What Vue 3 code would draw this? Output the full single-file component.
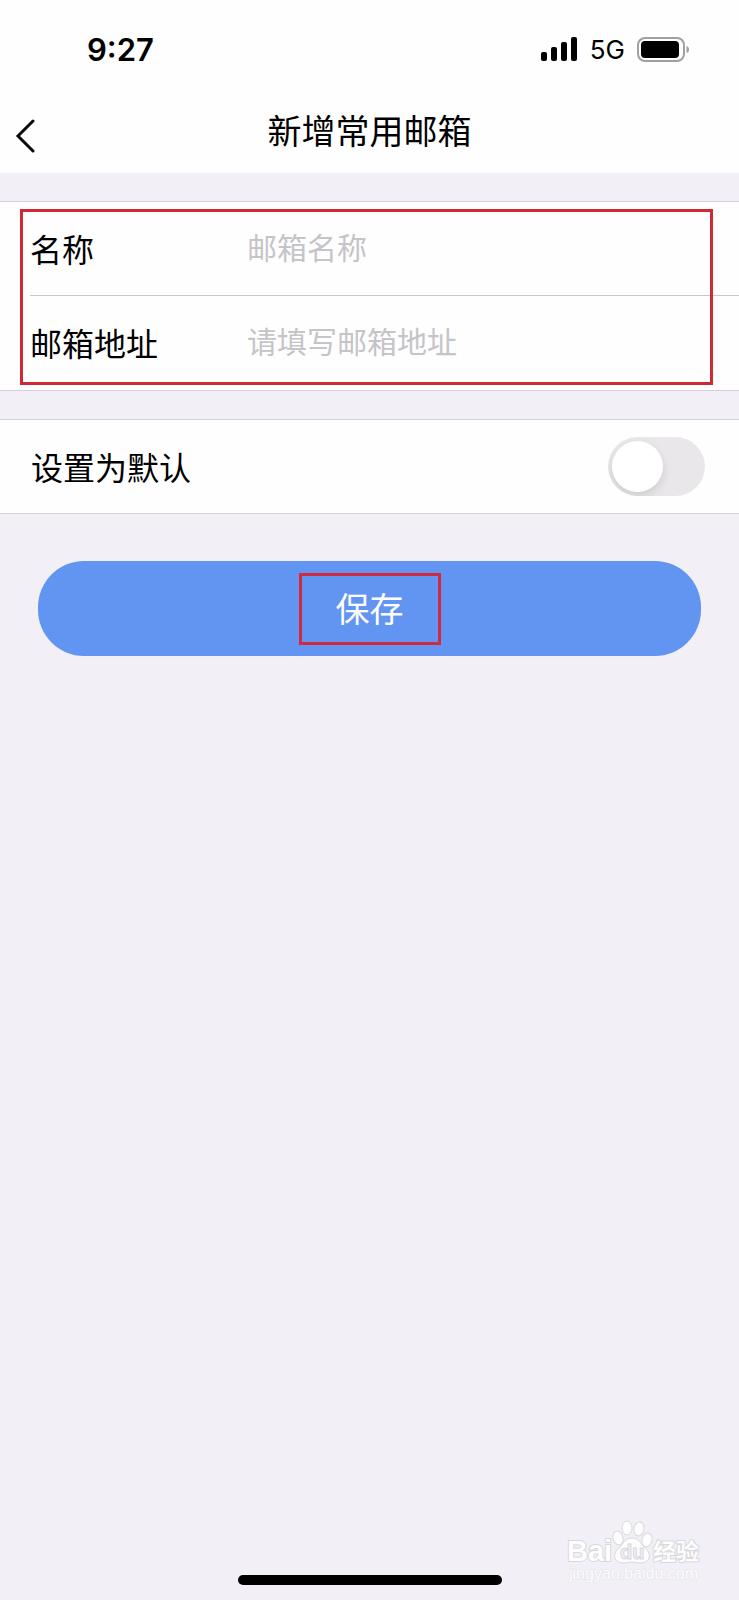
<template>
  <div class="page">
    <header class="top">
      <div class="status-bar">
        <span class="time">9:27</span>
        <div class="status-right">
          <svg class="signal" width="38" height="25" viewBox="0 0 38 25">
            <rect x="1" y="15" width="6" height="9" rx="2" />
            <rect x="11" y="10" width="6" height="14" rx="2" />
            <rect x="21" y="5" width="6" height="19" rx="2" />
            <rect x="31" y="0" width="6" height="24" rx="2" />
          </svg>
          <span class="network">5G</span>
          <svg class="battery" width="53" height="25" viewBox="0 0 53 25">
            <rect x="1" y="1" width="46" height="23" rx="7" fill="none" stroke="#a0a0a2" stroke-width="2" />
            <rect x="4" y="4" width="38" height="17" rx="4" />
            <path d="M49.500 9 Q52 9.500 52 12.500 Q52 15.500 49.500 16 Z" fill="#a0a0a2" />
          </svg>
        </div>
      </div>
      <nav class="nav-bar">
        <button class="back-btn" type="button" aria-label="返回">
          <svg width="20" height="34" viewBox="0 0 20 34" fill="none">
            <path d="M18 2L3 17L18 32" stroke="#0b0b0b" stroke-width="3" stroke-linecap="round" />
          </svg>
        </button>
        <h1 class="title">新增常用邮箱</h1>
      </nav>
    </header>

    <form class="form" @submit.prevent="save">
      <div class="group marked">
        <div v-for="field in fields" :key="field.id" class="row">
          <label class="label" :for="field.id">{{ field.label }}</label>
          <input
            :id="field.id"
            v-model="form[field.id]"
            class="input"
            :type="field.type"
            :placeholder="field.placeholder"
          />
        </div>
      </div>

      <div class="group">
        <div class="row">
          <label class="label label-wide" for="isDefault">设置为默认</label>
          <input id="isDefault" v-model="form.isDefault" class="switch" type="checkbox" role="switch" />
        </div>
      </div>

      <button class="save-btn" type="submit">
        <span class="save-text">保存</span>
      </button>
    </form>

    <footer class="footer">
      <div class="home-indicator"></div>
      <svg class="watermark" width="136" height="66" viewBox="0 0 136 66">
        <text class="brand" x="0" y="42" font-size="29">Bai</text>
        <g class="paw">
          <ellipse cx="51" cy="19" rx="5" ry="7" transform="rotate(-14 51 19)" />
          <ellipse cx="60" cy="9" rx="5" ry="7" />
          <ellipse cx="72" cy="10" rx="5" ry="7" transform="rotate(8 72 10)" />
          <ellipse cx="80" cy="21" rx="5" ry="7" transform="rotate(14 80 21)" />
          <path d="M65 19C57 19 56 26 51 30C45 35 47 44 56 44C60 44 62 43 65 43C68 43 70 44 74 44C83 44 85 35 79 30C74 26 73 19 65 19Z" />
        </g>
        <text class="du" x="53" y="40" font-size="20">du</text>
        <text class="brand cjk" x="86" y="41" font-size="23">经验</text>
        <text class="site" x="2" y="60" font-size="16">jingyan.baidu.com</text>
      </svg>
    </footer>
  </div>
</template>

<script setup>
import { reactive } from 'vue'

const fields = [
  { id: 'name', label: '名称', type: 'text', placeholder: '邮箱名称' },
  { id: 'address', label: '邮箱地址', type: 'email', placeholder: '请填写邮箱地址' }
]

const form = reactive({
  name: '',
  address: '',
  isDefault: false
})

const emit = defineEmits(['save'])

const save = () => {
  emit('save', { ...form })
}
</script>

<style>
body {
  background: #f2f0f6;
}
</style>

<style scoped>
.page {
  min-height: 100vh;
  display: flex;
  flex-direction: column;
  background: #f2f0f6;
  color: #000;
  font-family: 'Liberation Sans', 'Noto Sans CJK SC', sans-serif;
}

.top {
  background: #fefefe;
}

.status-bar {
  height: 98px;
  padding: 0 49px 0 87px;
  display: flex;
  align-items: center;
  justify-content: space-between;
  box-sizing: border-box;
  font-family: Inter, sans-serif;
}

.time {
  font-size: 31px;
  font-weight: 600;
}

.status-right {
  display: flex;
  align-items: center;
  gap: 12px;
}

.network {
  font-size: 26px;
  font-weight: 400;
}

.nav-bar {
  height: 75px;
  display: grid;
  grid-template-columns: 1fr auto 1fr;
  align-items: center;
}

.back-btn {
  justify-self: start;
  display: flex;
  padding: 0 15px;
  border: none;
  background: none;
  cursor: pointer;
}

.title {
  margin: 0;
  padding-bottom: 8px;
  font-size: 34px;
  font-weight: 400;
  line-height: 40px;
}

.form {
  padding-top: 28px;
}

.group {
  position: relative;
  margin-bottom: 28px;
  background: #fefefe;
  border-top: 1px solid #d3d1d5;
  border-bottom: 1px solid #d3d1d5;
}

/* red frame lies over the rows */
.marked::after {
  content: '';
  position: absolute;
  top: 7px;
  right: 26px;
  bottom: 5px;
  left: 20px;
  border: 3px solid #cf2a34;
  pointer-events: none;
}

.row {
  display: flex;
  align-items: center;
  height: 93px;
  margin-left: 31px;
}

.marked .row {
  margin-left: 30px;
}

.row + .row {
  height: 94px;
  border-top: 1px solid #c8c7cb;
}

.label {
  width: 217px;
  padding-top: 4px;
  font-size: 32px;
  line-height: 40px;
}

.label-wide {
  flex: 1;
}

.input {
  flex: 1;
  min-width: 0;
  height: 60px;
  padding: 0;
  border: none;
  outline: none;
  background: none;
  font-family: inherit;
  font-size: 30px;
  color: #000;
}

.input::placeholder {
  color: #c5c4c8;
  opacity: 1;
}

.switch {
  appearance: none;
  display: flex;
  width: 97px;
  height: 59px;
  margin: 0 34px 0 0;
  padding: 4px;
  box-sizing: border-box;
  border-radius: 30px;
  background: #e9e7ea;
  overflow: hidden;
  cursor: pointer;
}

.switch::before {
  content: '';
  width: 51px;
  height: 51px;
  border-radius: 50%;
  background: #fff;
  box-shadow: 0 4px 10px rgba(0, 0, 0, 0.12);
}

.switch:checked {
  justify-content: flex-end;
  background: #6295f2;
}

.save-btn {
  display: flex;
  align-items: center;
  justify-content: center;
  width: calc(100% - 76px);
  height: 95px;
  margin: 47px 38px 0;
  padding: 0;
  border: none;
  border-radius: 46px;
  background: #6295f2;
  color: #fff;
  font-family: inherit;
  font-size: 34px;
  cursor: pointer;
}

.save-text {
  padding: 14px 34px 12px;
  border: 3px solid #cf2a40;
  line-height: 40px;
}

.footer {
  display: grid;
  grid-template-columns: 1fr 264px 1fr;
  align-items: end;
  margin-top: auto;
  padding-bottom: 15px;
}

.home-indicator {
  grid-column: 2;
  height: 10px;
  border-radius: 5px;
  background: #000;
}

.watermark {
  justify-self: end;
  margin-right: 36px;
}

.watermark text,
.paw {
  fill: #fdfdfe;
  stroke: #d8d7dc;
  stroke-width: 1px;
}

.brand,
.du {
  font-weight: 700;
}

.watermark .brand {
  stroke-width: 2px;
  paint-order: stroke;
}

.cjk {
  font-family: 'Noto Sans CJK SC', sans-serif;
}

.watermark .du {
  fill: #f2f0f6;
}

.watermark .site {
  stroke: #e3e2e7;
  paint-order: stroke;
}
</style>
